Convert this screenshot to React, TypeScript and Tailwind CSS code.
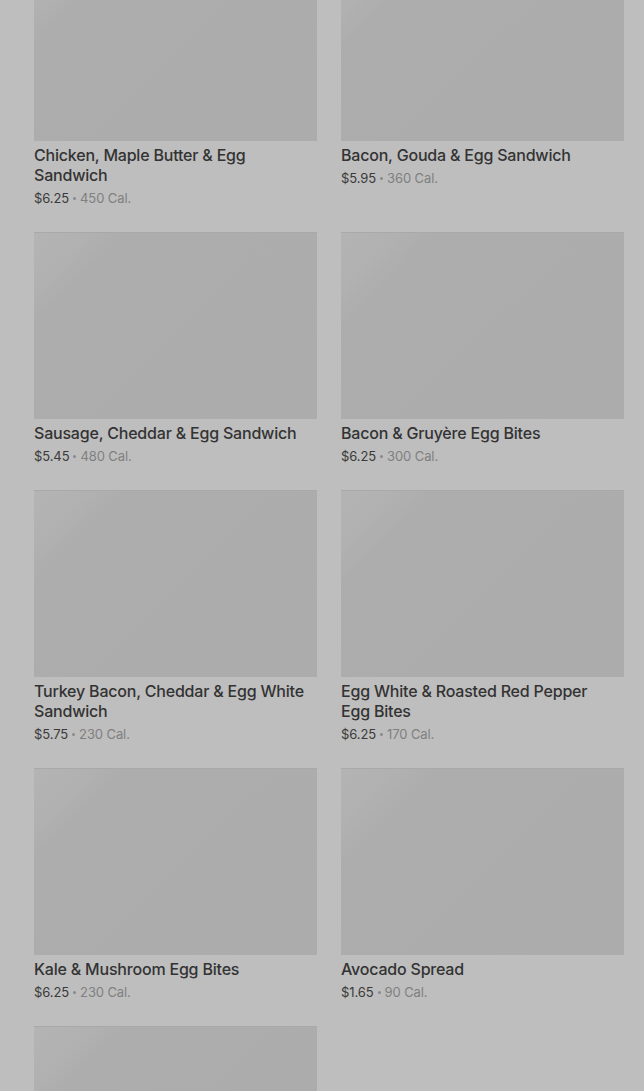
/* ── Menu data ─────────────────────────────────────────────── */

const ITEMS = [
  { title: "Chicken, Maple Butter & Egg Sandwich", price: "$6.25", cal: "450 Cal." },
  { title: "Bacon, Gouda & Egg Sandwich", price: "$5.95", cal: "360 Cal." },
  { title: "Sausage, Cheddar & Egg Sandwich", price: "$5.45", cal: "480 Cal." },
  { title: "Bacon & Gruyère Egg Bites", price: "$6.25", cal: "300 Cal." },
  { title: "Turkey Bacon, Cheddar & Egg White Sandwich", price: "$5.75", cal: "230 Cal." },
  { title: "Egg White & Roasted Red Pepper Egg Bites", price: "$6.25", cal: "170 Cal." },
  { title: "Kale & Mushroom Egg Bites", price: "$6.25", cal: "230 Cal." },
  { title: "Avocado Spread", price: "$1.65", cal: "90 Cal." },
  { title: "", price: "", cal: "" },
];

/* ── Card ──────────────────────────────────────────────────── */

function ItemCard({ title, price, cal }: { title: string; price: string; cal: string }) {
  return (
    <div className="flex flex-col">
      <div className="h-[187px] w-full bg-[linear-gradient(135deg,#b4b4b4_0%,#b1b1b1_12%,#adadad_20%,#acacac_100%)] shadow-[inset_0_1px_0_#a9a9a9]" />
      {title && (
        <>
          <div className="mt-1 pr-[8px] text-[16px] leading-5 font-medium tracking-[-0.2px] text-[#333333]">
            {title}
          </div>
          <div className="mt-[3px] flex items-center text-[13px] leading-5 tracking-[-0.1px] text-[#3a3a3a]">
            {price}
            <span className="mx-[4px] inline-block h-[3px] w-[3px] rounded-full bg-[#8a8a8a]" />
            <span className="text-[#808080]">{cal}</span>
          </div>
        </>
      )}
    </div>
  );
}

/* ── Page ──────────────────────────────────────────────────── */

export default function App() {
  return (
    <div
      className="h-[1091px] overflow-hidden bg-[#bebebe] pl-[34px] pr-[20px]"
      style={{ fontFamily: "Inter, 'Noto Sans', sans-serif" }}
    >
      <div className="-mt-[46px] grid grid-cols-2 gap-x-[24px] gap-y-[24px]">
        {ITEMS.map((it, i) => (
          <ItemCard key={i} {...it} />
        ))}
      </div>
    </div>
  );
}
